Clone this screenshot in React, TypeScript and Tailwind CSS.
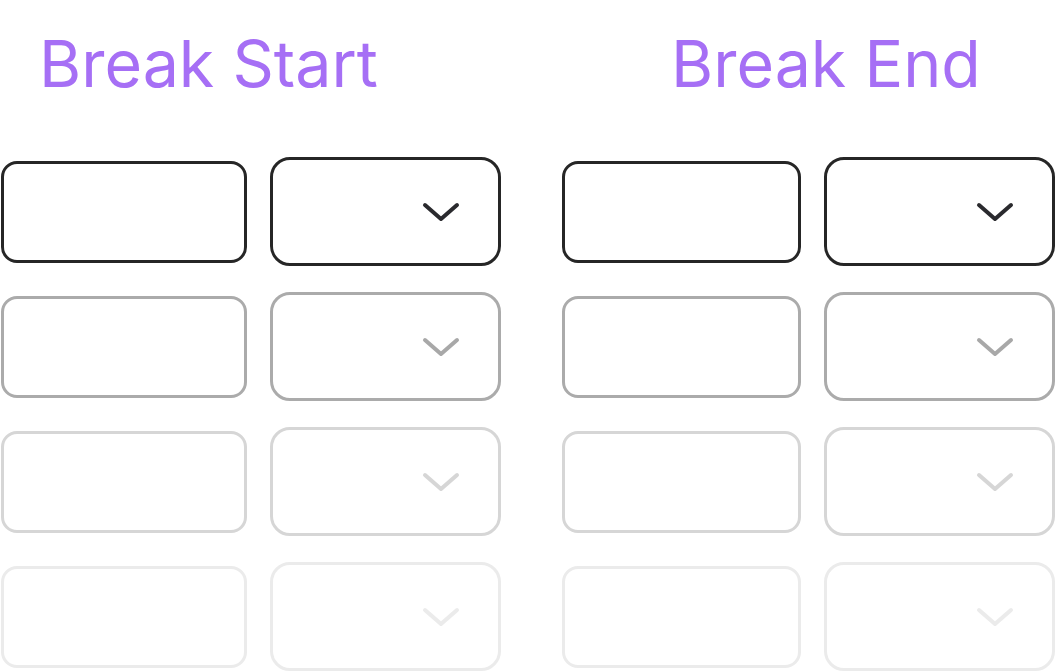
const shades = [
  { border: 'border-[#262626]', icon: 'text-[#2a2a2e]' },
  { border: 'border-[#ababab]', icon: 'text-[#a8a8a8]' },
  { border: 'border-[#d6d6d6]', icon: 'text-[#d6d6d6]' },
  { border: 'border-[#ebebeb]', icon: 'text-[#ebebeb]' },
];

const Chevron = ({ className }: { className: string }) => (
  <svg
    className={className}
    width="38"
    height="22"
    viewBox="0 0 38 22"
    fill="none"
    stroke="currentColor"
    strokeWidth="4"
    strokeLinecap="round"
    strokeLinejoin="round"
  >
    <path d="M3 4 L19 18 L35 4" />
  </svg>
);

const Column = ({ title, inputWidth, titlePad }: { title: string; inputWidth: string; titlePad: string }) => (
  <div className="flex flex-col shrink-0">
    <div className={`h-[144px] shrink-0 ${titlePad} pt-[32px]`}>
      <h2 className="text-[64.5px] leading-none text-[#a66ff5]">{title}</h2>
    </div>
    <div className="flex flex-col shrink-0">
      {shades.map((s, i) => (
        <div key={i} className="flex items-center gap-[23px] h-[135px] shrink-0">
          <div className={`${inputWidth} h-[102px] rounded-[16px] border-[3px] ${s.border} bg-white`} />
          <div
            className={`w-[231px] h-[109px] rounded-[20px] border-[3px] ${s.border} bg-white flex items-center justify-end pr-[38px]`}
          >
            <Chevron className={s.icon} />
          </div>
        </div>
      ))}
    </div>
  </div>
);

export default function App() {
  return (
    <div
      className="w-[1055px] h-[671px] overflow-hidden bg-white flex items-start gap-[61px] pl-px"
      style={{ fontFamily: 'Inter, "Noto Sans", sans-serif' }}
    >
      <Column title="Break Start" inputWidth="w-[246px]" titlePad="pl-[38px]" />
      <Column title="Break End" inputWidth="w-[239px]" titlePad="pl-[109px]" />
    </div>
  );
}
